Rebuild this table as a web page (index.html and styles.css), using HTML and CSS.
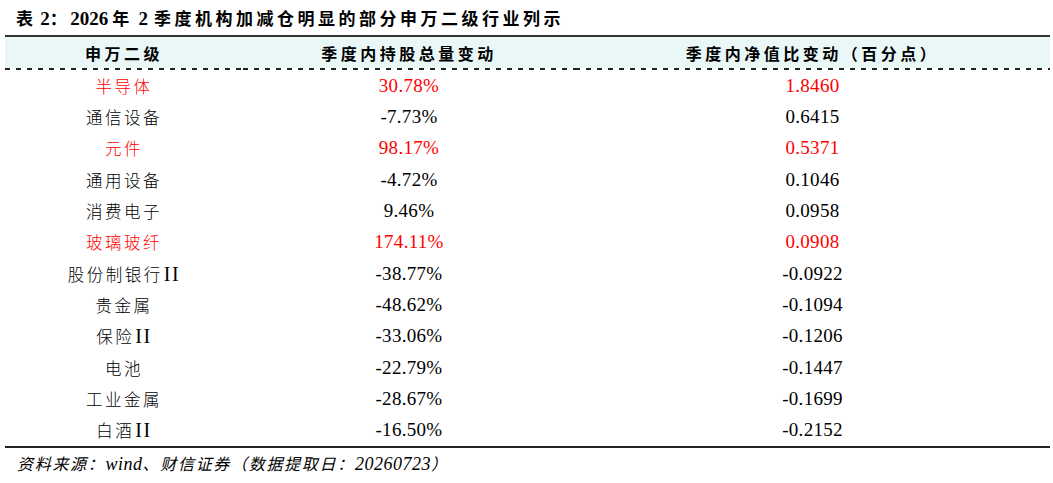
FILE: index.html
```html
<!DOCTYPE html>
<html lang="zh-CN">
<head>
<meta charset="utf-8">
<link rel="stylesheet" href="styles.css">
</head>
<body>
<div class="page">
  <div class="title"><span class="cn">表</span> <span class="num">2</span><span class="cn">：</span><span class="num">2026</span> <span class="cn">年</span> <span class="num gap">2</span> <span class="cn">季度机构加减仓明显的部分申万二级行业列示</span></div>
  <table class="data">
    <thead>
      <tr>
        <th class="c1">申万二级</th>
        <th class="c2">季度内持股总量变动</th>
        <th class="c3">季度内净值比变动（百分点）</th>
      </tr>
    </thead>
    <tbody>
      <tr class="red"><td class="cn">半导体</td><td class="num">30.78%</td><td class="num">1.8460</td></tr>
      <tr><td class="cn">通信设备</td><td class="num">-7.73%</td><td class="num">0.6415</td></tr>
      <tr class="red"><td class="cn">元件</td><td class="num">98.17%</td><td class="num">0.5371</td></tr>
      <tr><td class="cn">通用设备</td><td class="num">-4.72%</td><td class="num">0.1046</td></tr>
      <tr><td class="cn">消费电子</td><td class="num">9.46%</td><td class="num">0.0958</td></tr>
      <tr class="red"><td class="cn">玻璃玻纤</td><td class="num">174.11%</td><td class="num">0.0908</td></tr>
      <tr><td class="cn">股份制银行<span class="roman">II</span></td><td class="num">-38.77%</td><td class="num">-0.0922</td></tr>
      <tr><td class="cn">贵金属</td><td class="num">-48.62%</td><td class="num">-0.1094</td></tr>
      <tr><td class="cn">保险<span class="roman">II</span></td><td class="num">-33.06%</td><td class="num">-0.1206</td></tr>
      <tr><td class="cn">电池</td><td class="num">-22.79%</td><td class="num">-0.1447</td></tr>
      <tr><td class="cn">工业金属</td><td class="num">-28.67%</td><td class="num">-0.1699</td></tr>
      <tr class="last"><td class="cn">白酒<span class="roman">II</span></td><td class="num">-16.50%</td><td class="num">-0.2152</td></tr>
    </tbody>
  </table>
  <div class="source"><span class="cn">资料来源：</span><span class="num">wind</span><span class="cn">、财信证券（数据提取日：</span><span class="num">20260723</span><span class="cn">）</span></div>
</div>
</body>
</html>
```

FILE: styles.css
```css
html, body {
  margin: 0;
  padding: 0;
  background: #ffffff;
  color: #000000;
}

.page {
  width: 1045px;
  padding-left: 5px;
  font-family: "Noto Sans CJK SC", "Liberation Serif", sans-serif;
}

.title {
  height: 35px;
  line-height: 36px;
  padding-left: 11px;
  font-weight: 700;
  font-size: 17px;
  white-space: nowrap;
}

.title .cn {
  letter-spacing: 3.5px;
}

.title .num {
  font-family: "Liberation Serif", serif;
  font-size: 19px;
  font-weight: 700;
}

.title .gap {
  margin: 0 2px;
}

.data {
  width: 1045px;
  border-collapse: collapse;
  border-top: 2px solid #333333;
  table-layout: fixed;
}

.data th {
  height: 31px;
  padding: 0 0 2px 0;
  background:
    repeating-linear-gradient(to right, #222222 0 5px, transparent 5px 11px) left bottom / 100% 2px no-repeat,
    linear-gradient(#eaf7f7, #eaf7f7) left top / 100% 31px no-repeat;
  font-weight: 700;
  font-size: 16px;
  letter-spacing: 3.5px;
  text-align: center;
  vertical-align: middle;
}

.data th.c1 { width: 238px; }
.data th.c2 { width: 332px; }

.data td {
  height: 31.33px;
  padding: 0;
  text-align: center;
  vertical-align: middle;
}

.data td.cn {
  font-family: "Noto Sans CJK SC", sans-serif;
  font-size: 16.5px;
  font-weight: 300;
  letter-spacing: 2.5px;
}

.data td.num {
  font-family: "Liberation Serif", serif;
  font-size: 19px;
  letter-spacing: 0.3px;
}

.roman {
  font-family: "Liberation Serif", serif;
  font-size: 20px;
  letter-spacing: 1.5px;
  padding-left: 1px;
}

.data tr.red td {
  color: #ff0000;
}

.data tr.last td {
  border-bottom: 2px solid #222222;
}

.source {
  padding-left: 12px;
  height: 30px;
  line-height: 30px;
  font-style: italic;
  font-size: 16px;
  letter-spacing: 1.7px;
}

.source .num {
  font-family: "Liberation Serif", serif;
  font-size: 18px;
  letter-spacing: 0.5px;
}
```
